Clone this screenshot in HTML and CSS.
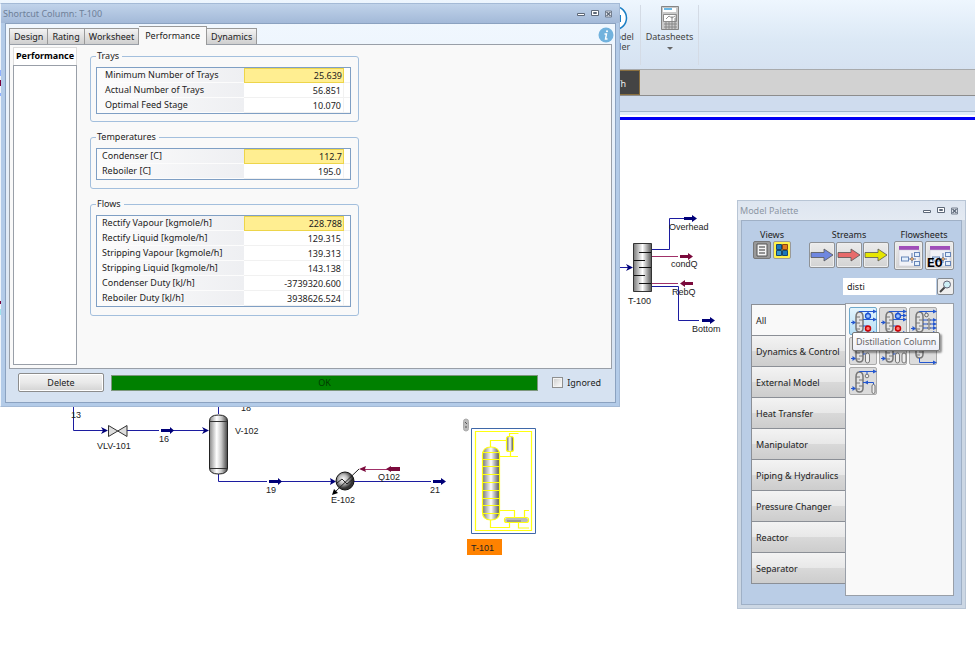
FILE: index.html
```html
<!DOCTYPE html>
<html lang="en">
<head>
<meta charset="utf-8">
<title>Shortcut Column: T-100</title>
<link rel="stylesheet" href="styles.css">
</head>
<body>
<svg class="defs" aria-hidden="true">
  <defs>
    <linearGradient id="steel"><stop offset="0" stop-color="#777"/><stop offset=".5" stop-color="#fff"/><stop offset="1" stop-color="#555"/></linearGradient>
    <linearGradient id="vessel"><stop offset="0" stop-color="#888"/><stop offset=".4" stop-color="#fff"/><stop offset=".65" stop-color="#ccc"/><stop offset="1" stop-color="#444"/></linearGradient>
    <radialGradient id="ball" cx=".4" cy=".4"><stop offset="0" stop-color="#fff"/><stop offset=".5" stop-color="#bbb"/><stop offset="1" stop-color="#333"/></radialGradient>
    <symbol id="col" viewBox="0 0 28 28">
      <path d="M6 9Q6 4 9.500 4T13 9v11q0 4-3.500 4T6 20z" fill="#e2e2e2" stroke="#777" stroke-width="1.500"/>
      <path d="M6 9h4M9 12h4M6 15h4M9 18h4M6 21h4" stroke="#777"/>
    </symbol>
    <symbol id="dist" viewBox="0 0 28 28">
      <use href="#col"/>
      <path d="M1 14.500h4M9.500 4V3.500H23M13 11.500h10M13 18h4v1M9.500 24v1H23M18 4v2M18 22v3" fill="none" stroke="#2457cf" stroke-width="1.200"/>
      <path d="M2.500 12.200l3.500 2.300-3.500 2.300zM23 1.500l4 2-4 2zM23 9.500l4 2-4 2zM23 23l4 2-4 2z" fill="#2457cf"/>
      <circle cx="18" cy="8" r="2.500" fill="#9cc3ff" stroke="#1b50cf" stroke-width="1.300"/><circle cx="18" cy="20.500" r="2.500" fill="#f77" stroke="#c00" stroke-width="1.500"/>
    </symbol>
    <symbol id="flow" viewBox="0 0 24 24">
      <path d="M2 2h20v4H2z" fill="#a04cb8"/><path d="M2 6h20v16H2z" fill="#f1f2f7" stroke="#c7c7d3" stroke-width=".5"/>
      <path d="M11 15h8M15 9v10" stroke="#5f7fb5"/>
      <rect x="4.500" y="13" width="7" height="4" fill="#e4f0fd" stroke="#6685b8"/><rect x="17.500" y="8.500" width="5" height="4" fill="#e4f0fd" stroke="#6685b8"/><rect x="17.500" y="17.500" width="5" height="4" fill="#e4f0fd" stroke="#6685b8"/><path d="M13 15l2-2 2 2-2 2z" fill="#d9a06b" stroke="#777" stroke-width=".6"/>
    </symbol>
    <symbol id="arrow" viewBox="0 0 24 24"><path d="M1 9.500h13V6l9 6-9 6v-3.500H1z" stroke="#555" stroke-width=".8"/></symbol>
    <symbol id="winctl" viewBox="0 0 36 8">
      <g fill="none" stroke="#5d6878"><path d="M.500 3.500h7v2h-7z" fill="#fff"/><path d="M14.500 .500h7v5h-7z" fill="#fff"/><path d="M16.500 2.500h3v1h-3z"/><path d="M28.500 1h6v6h-6z" stroke-width=".8" fill="#e9eef6"/><path d="M29.500 2l4 4m0-4l-4 4" stroke-width="1.300"/></g>
    </symbol>
  </defs>
</svg>

<header class="ribbon">
  <div class="tools">
    <div class="tool model">
      <svg width="26" height="26" viewBox="0 0 26 26"><circle cx="13" cy="13" r="11.500" fill="#fff" stroke="#1b7fc4" stroke-width="1.500"/><path d="M11 5l5 2v3h3v7h-3v3l-5 2z" fill="#1b7fc4"/><path d="M15 11v4M13 13h5" stroke="#fff"/></svg>
      <span>AI Model<br>Builder</span>
    </div>
    <div class="tool sheets">
      <svg width="20" height="26" viewBox="0 0 20 26"><path d="M1.500 1.500h17v23h-17z" fill="#c9c9c9" stroke="#858585"/><path d="M3 3h13v4H3z" fill="#fff"/><path d="M4 4h8" stroke="#3aa0dc" stroke-width="1.500"/><path d="M4 10h11v6H4z" fill="#fff"/><path d="M3.500 9.500h13v7h-13zM4 19h13M4 22h13M6 17v7M9 17v7M12 11v13M15 13v11M6 14l3-3 3 2 3-2" fill="none" stroke="#858585" stroke-width=".9"/></svg>
      <span>Datasheets</span>
      <i class="caret"></i>
    </div>
  </div>
  <div class="tabstrip"><span class="darktab">Th</span></div>
  <div class="subband"></div>
</header>

<main class="desktop">
  <svg class="sheet" width="975" height="645" viewBox="0 0 975 645" role="img" aria-label="Process flowsheet">
    <g fill="none" stroke="#1c1ca0" stroke-width="1">
      <path d="M620 267.500h8M651 249.500h18.500v-31H684M651 286.500h27.500v34H699"/>
      <path d="M73.500 405v25.500H103M127 430.500h32M173 430.500h31M218.500 405v9M218.500 474v7.500H267M281 481.500h50M354 481.500h77"/>
    </g>
    <g fill="none" stroke="#a03068"><path d="M651 256.500h27M651 283.500h27M364 469.500h24"/></g>
    <g fill="#000078">
      <path d="M626 264l7 3.500-7 3.500 2-3.500zM684 217h8v-2l5 3.500-5 3.500v-2h-8zM702 319h8v-2l5 3.500-5 3.500v-2h-8z"/>
      <path d="M101 427l7 3.500-7 3.500 2-3.500zM202 427l7 3.500-7 3.500 2-3.500zM161 429h9v-2l4 3.500-4 3.500v-2h-9zM269 480h9v-2l4 3.500-4 3.500v-2h-9zM330 478l6 3.500-6 3.500 1-3.500zM433 480h8v-2l5 3.500-5 3.500v-2h-8z"/>
    </g>
    <g fill="#7b0a3c"><path d="M680 255h8v-2l5 3.500-5 3.500v-2h-8zM693 282h-8v-2l-5 3.500 5 3.500v-2h8zM400 467h-9v-1l-5 3 5 3v-1h9zM359 469l7-3-1 3 1 3z"/></g>
    <path d="M633.500 243.500h18v48h-18z" fill="url(#steel)" stroke="#333"/>
    <path d="M639 252.500h12M634 260.500h11M639 267.500h12M634 275.500h11M639 283.500h12" stroke="#111"/>
    <path d="M108.500 425.500v11l18.500-11v11z" fill="#ddd" stroke="#333"/>
    <path d="M209.500 421q0-6 9-6t9 6v47q0 6-9 6t-9-6z" fill="url(#vessel)" stroke="#222"/><path d="M209.500 421.500h18M209.500 468.500h18" stroke="#333"/>
    <circle cx="345" cy="481" r="9" fill="url(#ball)" stroke="#111"/>
    <path d="M359 469l-24 23M337 483l5-4 5 5 6-5" fill="none" stroke="#222"/><path d="M332 495l2-6 4 4z"/>
    <rect x="463.500" y="419" width="5" height="12" rx="2.500" fill="#bbb" stroke="#aaa"/><path d="M465 422l2 2M465 427h2" stroke="#555"/>
    <path d="M471.500 428.500h64v105h-64z" fill="#fff" stroke="#3f68a8"/>
    <path d="M482.500 455q0-8 8.500-8t8.500 8v57q0 8-8.500 8t-8.500-8z" fill="url(#steel)"/><rect x="507" y="436" width="6" height="16" rx="2" fill="url(#steel)"/><rect x="505" y="518" width="23" height="5" rx="2" fill="#bbb"/><path d="M507 521h14" stroke="#777"/>
    <g fill="none" stroke="#ffff10" stroke-width="1.200">
      <path d="M475.500 431.500h56v99h-56z"/>
      <path d="M482.500 455q0-8 8.500-8t8.500 8v57q0 8-8.500 8t-8.500-8zM482 452.500h18M482 459.500h18M482 466.500h18M482 474.500h18M482 482.500h18M482 490.500h18M482 498.500h18M482 505.500h18M482 513.500h18"/>
      <rect x="506.500" y="436.500" width="7" height="15" rx="2"/><path d="M490.500 447v-6.500h16M509.500 436v-2.500h9M500 456.500h18M510.500 452v4M500 510.500h14.500v7M490.500 520v7.500h19V523M529 510.500h-4.500v7M518.500 523v5H529"/><rect x="504.500" y="517.500" width="24" height="5" rx="2"/>
    </g>
    <path d="M467 539h35v16h-35z" fill="#ff8200"/>
    <g class="labels">
      <text x="669" y="230">Overhead</text><text x="671" y="267">condQ</text><text x="672" y="295">RebQ</text><text x="628" y="304">T-100</text><text x="692" y="332">Bottom</text>
      <text x="71" y="418">13</text><text x="241" y="411">18</text><text x="97" y="449">VLV-101</text><text x="159" y="442">16</text><text x="235" y="434">V-102</text><text x="266" y="493">19</text><text x="378" y="480">Q102</text><text x="331" y="503">E-102</text><text x="430" y="493">21</text><text x="471" y="551">T-101</text>
    </g>
  </svg>

  <section class="window column">
    <header class="titlebar"><h1>Shortcut Column: T-100</h1><svg width="36" height="8"><use href="#winctl"/></svg></header>
    <div class="frame">
      <div class="tabs" role="tablist">
        <button role="tab">Design</button><button role="tab">Rating</button><button role="tab">Worksheet</button><button role="tab" class="on" aria-selected="true">Performance</button><button role="tab">Dynamics</button>
        <svg class="info" width="16" height="16" viewBox="0 0 16 16"><circle cx="8" cy="8" r="7.500" fill="#72b2dd"/><circle cx="9" cy="4.300" r="1" fill="#fff"/><path d="M6.500 7h2l-1 5h2" fill="none" stroke="#fff" stroke-width="1.400"/></svg>
      </div>
      <div class="panel">
        <aside class="pages"><h2>Performance</h2><div class="list"></div></aside>
        <div class="groups">
          <fieldset class="trays"><legend>Trays</legend>
            <table><tbody>
              <tr><th>Minimum Number of Trays</th><td class="hot">25.639</td><td></td></tr>
              <tr><th>Actual Number of Trays</th><td>56.851</td><td></td></tr>
              <tr><th>Optimal Feed Stage</th><td>10.070</td><td></td></tr>
            </tbody></table>
          </fieldset>
          <fieldset><legend>Temperatures</legend>
            <table><tbody>
              <tr><th>Condenser [C]</th><td class="hot">112.7</td><td></td></tr>
              <tr><th>Reboiler [C]</th><td>195.0</td><td></td></tr>
            </tbody></table>
          </fieldset>
          <fieldset><legend>Flows</legend>
            <table><tbody>
              <tr><th>Rectify Vapour [kgmole/h]</th><td class="hot">228.788</td><td></td></tr>
              <tr><th>Rectify Liquid [kgmole/h]</th><td>129.315</td><td></td></tr>
              <tr><th>Stripping Vapour [kgmole/h]</th><td>139.313</td><td></td></tr>
              <tr><th>Stripping Liquid [kgmole/h]</th><td>143.138</td><td></td></tr>
              <tr><th>Condenser Duty [kJ/h]</th><td>-3739320.600</td><td></td></tr>
              <tr><th>Reboiler Duty [kJ/h]</th><td>3938626.524</td><td></td></tr>
            </tbody></table>
          </fieldset>
        </div>
      </div>
      <footer class="status">
        <button class="delete">Delete</button>
        <output class="ok">OK</output>
        <label class="ignored"><input type="checkbox"> Ignored</label>
      </footer>
    </div>
  </section>

  <section class="window palette">
    <header class="titlebar"><h1>Model Palette</h1><svg width="36" height="8"><use href="#winctl"/></svg></header>
    <div class="body">
      <div class="toolbar">
        <div class="set views"><h2>Views</h2><div class="row">
          <button class="small dark" aria-label="List view"><svg width="16" height="16" viewBox="0 0 16 16"><path d="M3 2h10v12H3z" fill="#f5f5f5" stroke="#555"/><path d="M5 5h6M5 8h6M5 11h6" stroke="#333"/></svg></button>
          <button class="small lit" aria-label="Icon view"><svg width="16" height="16" viewBox="0 0 16 16"><path d="M2.500 2.500h5v5h-5zM8.500 8.500h5v5h-5z" fill="#1976ba" stroke="#15456e"/><path d="M8.500 2.500h5v5h-5z" fill="#e07a20" stroke="#8a4510"/><path d="M2.500 8.500h5v5h-5z" fill="#3597d0" stroke="#15456e"/></svg></button>
        </div></div>
        <div class="set streams"><h2>Streams</h2><div class="row">
          <button class="mid" aria-label="Material stream"><svg width="24" height="24" fill="#6f87e0"><use href="#arrow"/></svg></button>
          <button class="mid" aria-label="Energy stream"><svg width="24" height="24" fill="#e86b6b"><use href="#arrow"/></svg></button>
          <button class="mid" aria-label="Generic stream"><svg width="24" height="24" fill="#e6e600"><use href="#arrow"/></svg></button>
        </div></div>
        <div class="set flows"><h2>Flowsheets</h2><div class="row">
          <button class="big" aria-label="Sub-flowsheet"><svg width="24" height="24"><use href="#flow"/></svg></button>
          <button class="big" aria-label="EO sub-flowsheet"><svg width="24" height="24"><use href="#flow"/></svg><b>EO</b></button>
        </div></div>
      </div>
      <div class="search">
        <input type="text" value="disti" aria-label="Search models">
        <button aria-label="Search"><svg width="15" height="15" viewBox="0 0 15 15"><path d="M2 13l5-5" stroke="#444" stroke-width="2"/><circle cx="9" cy="5.500" r="3.500" fill="#cdeef5" stroke="#667"/></svg></button>
      </div>
      <div class="browser">
        <nav class="cats">
          <button class="on">All</button><button>Dynamics &amp; Control</button><button>External Model</button><button>Heat Transfer</button><button>Manipulator</button><button>Piping &amp; Hydraulics</button><button>Pressure Changer</button><button>Reactor</button><button>Separator</button>
        </nav>
        <div class="models">
          <button class="hover" aria-label="Distillation Column"><svg width="28" height="28"><use href="#dist"/></svg></button>
          <button aria-label="Three phase distillation"><svg width="28" height="28" viewBox="0 0 28 28"><use href="#dist"/><path d="M20 7.500h3" stroke="#2457cf"/><path d="M23 5.500l4 2-4 2z" fill="#2457cf"/></svg></button>
          <button aria-label="Petroleum column"><svg width="28" height="28" viewBox="0 0 28 28"><use href="#col"/><path d="M1 20.500h4M9.500 4V3.500H23M13 12h10M13 16h10M13 20h10M9.500 24v1H23M16 4v3" fill="none" stroke="#2457cf"/><path d="M2.500 18l3.500 2.500L2.500 23zM23 1.500l4 2-4 2zM23 10l4 2-4 2zM23 14l4 2-4 2zM23 18l4 2-4 2zM23 23l4 2-4 2z" fill="#2457cf"/><g fill="#eee" stroke="#666"><circle cx="16.500" cy="7" r="1.800"/><circle cx="19" cy="12" r="1.200"/><circle cx="19" cy="16" r="1.200"/><circle cx="19" cy="20" r="1.200"/></g></svg></button>
          <button aria-label="Refluxed absorber"><svg width="28" height="28" viewBox="0 0 28 28"><use href="#col"/><path d="M1 20.500h4M9.500 4V3.500H23M13 16h3" fill="none" stroke="#2457cf"/><path d="M2.500 18l3.500 2.500L2.500 23z" fill="#2457cf"/><rect x="15.500" y="15" width="4" height="10" rx="2" fill="#eee" stroke="#777"/></svg></button>
          <button aria-label="Reboiled absorber"><svg width="28" height="28" viewBox="0 0 28 28"><use href="#col"/><path d="M1 20.500h4M9.500 4V3.500H23M13 16h3" fill="none" stroke="#2457cf"/><path d="M2.500 18l3.500 2.500L2.500 23z" fill="#2457cf"/><g fill="#eee" stroke="#777"><rect x="15.500" y="15" width="4" height="10" rx="2"/><rect x="22" y="15" width="4" height="10" rx="2"/></g></svg></button>
          <button aria-label="Absorber"><svg width="28" height="28" viewBox="0 0 28 28"><svg y="-4" width="28" height="28"><use href="#col"/></svg><path d="M9.500 20v4.500H23" fill="none" stroke="#2457cf"/><path d="M23 22.500l4 2-4 2z" fill="#2457cf"/></svg></button>
          <button aria-label="Liquid extractor"><svg width="28" height="28" viewBox="0 0 28 28"><use href="#col"/><path d="M1 20.500h4M9.500 4V3.500H23M17 4v3M13 14.500h10.500V18" fill="none" stroke="#2457cf"/><path d="M2.500 18l3.500 2.500L2.500 23zM23 1.500l4 2-4 2zM18 12.500l-4 2 4 2z" fill="#2457cf"/><g fill="#eee" stroke="#777"><circle cx="17" cy="8" r="1.800"/><rect x="22" y="16.500" width="3" height="9" rx="1.500"/></g></svg></button>
          <div class="tip" role="tooltip">Distillation Column</div>
        </div>
      </div>
    </div>
  </section>
</main>
<svg class="edge" width="1" height="320" aria-hidden="true"><path d="M0 70h1v6H0zM0 93h1v3H0z" fill="#8fb0ff"/><path d="M0 80h1v6H0zM0 301h1v3H0z" fill="#7b003c"/><path d="M0 309h1v6H0z" fill="#9ee4ee"/></svg>
</body>
</html>
```
FILE: styles.css
```css
* { box-sizing: border-box; }
body { margin: 0; min-height: 100vh; background: #fff; color: #222; font: 9px/12px "Noto Sans", "Open Sans", sans-serif; }
button, input { font: inherit; color: inherit; margin: 0; }
button { padding: 0; }
h1, h2 { margin: 0; font: inherit; }
svg { display: block; flex: none; }
.defs { position: absolute; width: 0; height: 0; }

/* Ribbon behind the windows */
.ribbon { border-bottom: 3px solid #0000f4; }
.tools { display: flex; height: 69px; padding: 5px 0 4px 596px; background: linear-gradient(#eef6fe, #dbe8f5 60%, #d6e2f1); }
.tool { display: flex; flex-direction: column; align-items: center; padding: 0 8px; border-right: 1px solid #d4dbe5; color: #444; line-height: 10px; text-align: center; white-space: nowrap; }
.tool span { margin-top: 1px; }
.model { width: 45px; padding: 0 6px 0 0; }
.sheets { width: 58px; }
.caret { margin-top: 5px; border: 3px solid transparent; border-top-color: #666; border-bottom: 0; }
.tabstrip { display: flex; height: 27px; padding-left: 560px; background: #d2d2d2; border-top: 1px solid #a8aaac; border-bottom: 1px solid #8d8d8d; }
.darktab { width: 80px; padding: 7px 13px; text-align: right; color: #eee; background: #444; border: 1px solid #8a7040; }
.subband { height: 21px; background: linear-gradient(#cfdcee 15px, #9fb3ca 15px, #9fb3ca 16px, #dfebf8 16px, #dfebf8 19px, #fff 19px); }

.sheet { position: absolute; left: 0; top: 0; }
.edge { position: absolute; left: 0; top: 0; }
.labels { font: 9px "Liberation Sans", Arial, sans-serif; fill: #222; }

/* Floating windows */
.window { position: absolute; }
.titlebar { display: flex; align-items: center; justify-content: space-between; height: 19px; }
.column { left: 0; top: 3px; width: 620px; padding: 0 3px 3px 4px; background: #b3cbe8; border: 1px solid #a4bad6; border-left-color: #eef4fb; }
.column .titlebar { margin: 0 -3px 0 -4px; padding: 0 6px 0 2px; color: #6e8098; background: linear-gradient(#c0d3ea, #a3b9d8); }
.frame { border: 1px solid #8ba2c0; padding: 1px 3px 10px 3px; background: linear-gradient(#f0f7fe, #d6e2f1 90%); }
.tabs { display: flex; align-items: flex-end; height: 19px; position: relative; }
.tabs button { height: 16px; padding: 0 4px; border: 1px solid #999; border-bottom: 0; border-left-width: 0; background: linear-gradient(#f3f3f3, #ddd 60%, #cfcfcf); }
.tabs button:first-child { border-left-width: 1px; }
.tabs .on { height: 19px; margin-bottom: -1px; padding: 0 6px; background: #f9f9f9; }
.info { margin-left: auto; margin-right: -2px; align-self: center; }
.panel { display: flex; gap: 14px; min-height: 325px; padding: 2px 3px 3px; border: 1px solid #999fa8; background: #f9f9f9; }
.pages { display: flex; flex-direction: column; width: 64px; background: #fff; border: 1px solid #ddd; }
.pages h2 { height: 17px; line-height: 16px; text-align: center; font-weight: 700; color: #000; }
.list { flex: 1; margin: 0 -1px -1px; border: 1px solid #999fa8; }
.groups { display: flex; flex-direction: column; gap: 9px; width: 269px; padding-top: 3px; margin-left: -1px; }
fieldset { min-width: 0; margin: 0; padding: 5px 8px 8px 5px; border: 1px solid #a3bfdd; border-radius: 3px; }
legend { padding: 0 3px 0 1px; line-height: 12px; }
.trays { padding-bottom: 7px; }
table { width: 255px; border: 1px solid #7f9fc4; border-collapse: separate; border-spacing: 0; background: #fff; table-layout: fixed; }
th { width: 147px; height: 15px; padding: 0 0 0 5px; text-align: left; font-weight: 400; line-height: 14px; background: linear-gradient(90deg, #fcfcfc, #eeeff2); border-bottom: 1px solid #fcfcfc; }
.trays th { padding-left: 8px; }
td { width: 100px; padding: 0 2px; text-align: right; line-height: 13px; border: 1px solid #f1f1f1; border-width: 0 1px 1px 0; }
td:last-child { width: 6px; padding: 0; border-right: 0; }
.hot { background: #ffee91; border: 1px solid #edd54a; padding: 0 1px; line-height: 12px; }
.status { display: flex; align-items: center; gap: 7px; padding: 4px 9px 0 9px; }
.delete { width: 86px; height: 19px; border: 1px solid #8c8c8c; border-radius: 2px; box-shadow: inset 0 0 0 1px #fff; background: linear-gradient(#f4f4f4, #e9e9e9 50%, #d3d3d3); }
.ok { flex: 1; height: 16px; line-height: 14px; text-align: center; color: #013c01; background: #008000; border: 1px solid #7d977d; }
.ignored { display: flex; align-items: center; gap: 4px; margin: 0 2px 0 7px; }
.ignored input { appearance: none; width: 11px; height: 11px; border: 1px solid #8e8f8f; background: linear-gradient(135deg, #ccc, #fff); box-shadow: inset 0 0 0 1px #f3f3f3; }

.palette { left: 737px; top: 200px; width: 229px; padding: 0 3px 3px; background: #ccd7e4; border: 1px solid #b8c5d5; }
.palette .titlebar { height: 19px; margin: 0 -3px; padding: 0 6px 0 2px; color: #8c96a4; background: linear-gradient(#dde5f0, #e4eaf2); }
.body { padding: 8px 7px 8px 9px; border: 1px solid #9fb0c6; background: #bacde6; }
.toolbar { display: flex; height: 49px; }
.set { display: flex; flex-direction: column; align-items: center; }
.set h2 { line-height: 12px; }
.row { display: flex; gap: 2px; }
.views { margin-left: 2px; }
.streams { margin-left: 18px; }
.streams .row { gap: 1px; padding-top: 1px; }
.flows { margin-left: auto; }
.toolbar button { display: grid; place-items: center; position: relative; border: 1px solid #8f9296; border-radius: 2px; background: linear-gradient(#ececec, #d3d3d3); box-shadow: inset 0 0 0 1px #eee; }
.toolbar .small { width: 18px; height: 18px; }
.toolbar .dark { background: #999; border-color: #777; box-shadow: none; }
.toolbar .lit { background: #fff04a; border-color: #999; box-shadow: none; }
.toolbar .mid { width: 26px; height: 26px; }
.toolbar .big { width: 29px; height: 29px; }
.big b { position: absolute; left: 1px; bottom: 0; font: 700 13px/10px "Liberation Mono", monospace; color: #000; }
.search { display: flex; justify-content: flex-end; gap: 1px; }
.search input { width: 93px; height: 17px; border: 0; padding: 0 4px; background: #fff; }
.search button { display: grid; place-items: center; width: 17px; height: 17px; border: 1px solid #858a90; border-radius: 2px; background: #eee; }
.browser { display: flex; margin-top: 8px; min-height: 293px; }
.cats { display: flex; flex-direction: column; width: 94px; padding-top: 1px; }
.cats button { height: 31px; padding: 1px 4px 0; text-align: left; white-space: nowrap; border: 1px solid #8b8f96; border-width: 1px 0 0 1px; background: linear-gradient(#f3f3f3, #e8e8e8 50%, #d9d9d9 50%, #cdcdcd); }
.cats button:last-child { height: 32px; border-bottom-width: 1px; }
.cats .on { background: #f9f9f9; }
.models { position: relative; flex: 1; display: grid; grid-template-columns: repeat(3, 28px); gap: 2px; align-content: start; padding: 3px; border: 1px solid #999fa8; background: #f9f9f9; }
.models button { height: 28px; width: 28px; display: grid; place-items: center; border: 1px solid #aaa; border-radius: 2px; background: #dcdcdc; }
.models .hover { background: linear-gradient(#e5f5fd, #b5dff6); border-color: #6fa9cc; }
.tip { position: absolute; left: 6px; top: 28px; padding: 2px 3px; white-space: nowrap; line-height: 13px; color: #666; border: 1px solid #777; border-radius: 2px; background: linear-gradient(#fff, #eceef6); box-shadow: 2px 2px 2px #0006; }
```
